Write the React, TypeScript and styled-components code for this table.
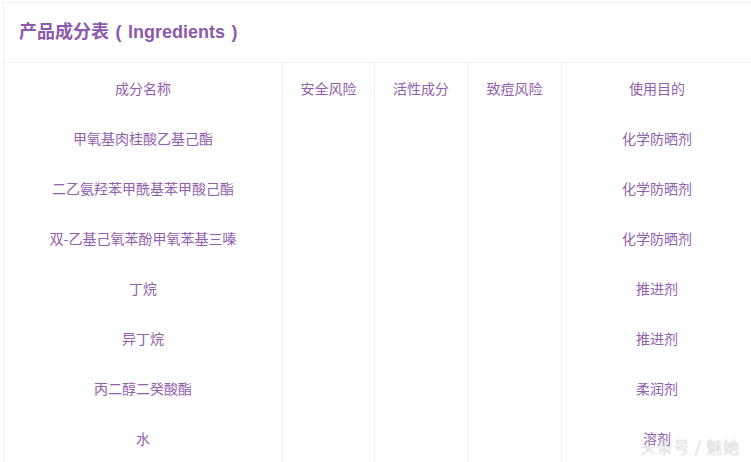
import React from 'react';
import styled, { createGlobalStyle } from 'styled-components';

const columns = ['成分名称', '安全风险', '活性成分', '致痘风险', '使用目的'];

const rows = [
  { name: '甲氧基肉桂酸乙基己酯', purpose: '化学防晒剂' },
  { name: '二乙氨羟苯甲酰基苯甲酸己酯', purpose: '化学防晒剂' },
  { name: '双-乙基己氧苯酚甲氧苯基三嗪', purpose: '化学防晒剂' },
  { name: '丁烷', purpose: '推进剂' },
  { name: '异丁烷', purpose: '推进剂' },
  { name: '丙二醇二癸酸酯', purpose: '柔润剂' },
  { name: '水', purpose: '溶剂' },
];

const GlobalStyle = createGlobalStyle`
  body {
    margin: 0;
    padding: 2px 0 0 3px;
    background: #fff;
    overflow: hidden;
    font-family: "Noto Sans CJK SC", "Liberation Sans", sans-serif;
  }
`;

const App = () => {
  return (
    <>
      <GlobalStyle />
      <Card>
        <Header>产品成分表 ( Ingredients )</Header>
        <Table>
          <Row>
            {columns.map((c) => (
              <Cell key={c}>{c}</Cell>
            ))}
          </Row>
          {rows.map(({ name, purpose }) => (
            <Row key={name}>
              <Cell>{name}</Cell>
              <Cell />
              <Cell />
              <Cell />
              <Cell>{purpose}</Cell>
            </Row>
          ))}
        </Table>
      </Card>
      <Watermark>头条号 / 魅她</Watermark>
    </>
  );
};

export default App;

const Card = styled.div`
  width: 748px;
  border: 1px solid #f0f0f0;
  border-bottom: none;
  background: #fff;
`;

const Header = styled.div`
  height: 60px;
  box-sizing: border-box;
  padding: 0 0 6px 15px;
  display: flex;
  align-items: center;
  font-family: "Liberation Sans", "Noto Sans CJK SC", sans-serif;
  font-size: 18px;
  font-weight: bold;
  word-spacing: 1.5px;
  color: #8c5aab;
  border-bottom: 1px solid #f0f0f0;
`;

const Table = styled.div`
  display: flex;
  flex-direction: column;
`;

const Row = styled.div`
  display: grid;
  grid-template-columns: 279px 92px 93px 94px 1fr;
  height: 50px;
`;

const Cell = styled.div`
  display: flex;
  align-items: center;
  justify-content: center;
  font-size: 14px;
  color: #9160ad;
  border-right: 1px solid #f0f0f0;

  &:last-child {
    border-right: none;
  }
`;

const Watermark = styled.div`
  position: absolute;
  left: 640px;
  top: 434px;
  font-family: "Noto Sans CJK SC", sans-serif;
  font-size: 16px;
  font-weight: 300;
  color: rgba(255, 255, 255, 0.75);
  text-shadow: 0 0 1px rgba(0, 0, 0, 0.28), 0 0 2px rgba(0, 0, 0, 0.12);
  letter-spacing: 0.8px;
`;
